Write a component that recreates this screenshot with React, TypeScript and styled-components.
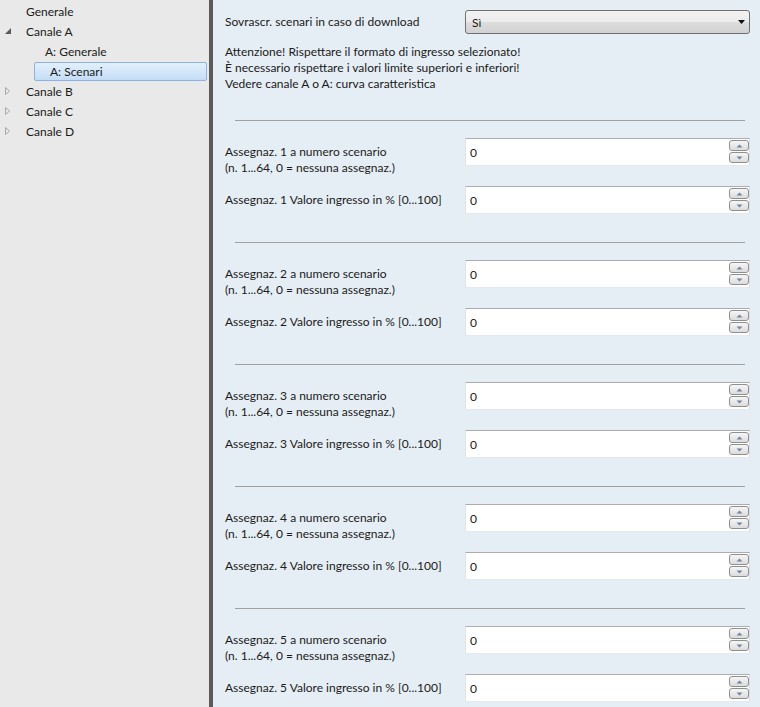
import React from 'react';
import styled, { createGlobalStyle } from 'styled-components';

const GlobalStyle = createGlobalStyle`
    html, body {
        margin: 0;
        padding: 0;
        height: 100%;
        overflow: hidden;
    }
    body {
        font-family: Lato, "Noto Sans", sans-serif;
        font-size: 12px;
        color: #1a1a1a;
    }
`;

const Window = styled.div`
    display: flex;
    height: 100vh;
    overflow: hidden;
`;

const Sidebar = styled.div`
    width: 209px;
    flex-shrink: 0;
    background: #e9e9e9;
    padding-top: 1px;
`;

const Splitter = styled.div`
    width: 4px;
    flex-shrink: 0;
    background: #5b5b5b;
`;

const TreeRow = styled.div`
    position: relative;
    display: flex;
    align-items: center;
    height: 20px;
`;

const Expander = styled.span`
    position: absolute;
    left: 4px;
    top: 6px;
    width: 8px;
    height: 8px;
    display: flex;
`;

const TreeLabel = styled.div<{ $level: number; $selected?: boolean }>`
    display: flex;
    align-items: center;
    box-sizing: border-box;
    height: 20px;
    margin-left: ${p => (p.$level === 0 ? 22 : 34)}px;
    padding-left: ${p => (p.$level === 0 ? 4 : p.$selected ? 15 : 11)}px;
    ${p => p.$selected && `
        width: 173px;
        height: 19px;
        border: 1px solid #8db2e3;
        border-radius: 2px;
        background: linear-gradient(#e3f0fd, #c4ddf5);
    `}
`;

const Content = styled.div`
    flex: 1;
    background: #e6eef5;
    padding: 10px 10px 0 12px;
    overflow: hidden;
`;

const Row = styled.div<{ $h?: number }>`
    display: flex;
    align-items: flex-start;
    height: ${p => p.$h ?? 28}px;
`;

const Label = styled.div<{ $pad?: number }>`
    width: 240px;
    flex-shrink: 0;
    line-height: 16px;
    padding-top: ${p => p.$pad ?? 6}px;
`;

const Select = styled.div`
    flex: 1;
    display: flex;
    align-items: center;
    justify-content: space-between;
    box-sizing: border-box;
    height: 24px;
    padding: 0 4px 0 6px;
    border: 1px solid #707070;
    border-radius: 3px;
    background: linear-gradient(#f3f3f3 0%, #ebebeb 50%, #dddddd 51%, #d2d2d2 100%);
`;

const Notes = styled.div`
    margin-top: 10px;
    line-height: 16px;
`;

const Group = styled.div`
    padding-top: 28px;
`;

const Separator = styled.div`
    height: 1px;
    background: #a0a0a0;
    margin: 0 5px 17px 10px;
`;

const Rows = styled.div`
    display: flex;
    flex-direction: column;
    gap: 20px;
`;

const Input = styled.div`
    flex: 1;
    display: flex;
    align-items: center;
    justify-content: space-between;
    box-sizing: border-box;
    height: 28px;
    padding: 0 0 0 4px;
    background: #ffffff;
    border-top: 1px solid #abadb3;
    border-left: 1px solid #e2e3ea;
    border-right: 1px solid #dbdfe6;
    border-bottom: 1px solid #e3e9ef;
`;

const Spinner = styled.div`
    display: flex;
    flex-direction: column;
    gap: 1px;
    align-self: flex-start;
    margin-top: 1px;
`;

const SpinButton = styled.div`
    width: 20px;
    height: 11px;
    box-sizing: border-box;
    display: flex;
    align-items: center;
    justify-content: center;
    border: 1px solid #8e8f8f;
    border-radius: 3px;
    background: linear-gradient(#f6f6f6, #dcdcdc);
`;

const tree = [
    { label: 'Generale', level: 0 },
    { label: 'Canale A', level: 0, expander: 'open' },
    { label: 'A: Generale', level: 1 },
    { label: 'A: Scenari', level: 1, selected: true },
    { label: 'Canale B', level: 0, expander: 'closed' },
    { label: 'Canale C', level: 0, expander: 'closed' },
    { label: 'Canale D', level: 0, expander: 'closed' },
];

const OpenGlyph = () => (
    <svg width="8" height="8" viewBox="0 0 8 8">
        <polygon points="7,1 7,7 1,7" fill="#595959" />
    </svg>
);

const ClosedGlyph = () => (
    <svg width="8" height="8" viewBox="0 0 8 8">
        <polygon points="1.5,0.5 5.5,4 1.5,7.5" fill="none" stroke="#a8a8a8" strokeWidth="1" />
    </svg>
);

const Arrow = ({ down }: { down?: boolean }) => (
    <svg width="7" height="4" viewBox="0 0 7 4">
        <polygon points={down ? '0.5,0.5 6.5,0.5 3.5,3.5' : '0.5,3.5 6.5,3.5 3.5,0.5'} fill="#7284a0" />
    </svg>
);

const NumberField = ({ value }: { value: string }) => (
    <Input>
        <span>{value}</span>
        <Spinner>
            <SpinButton><Arrow /></SpinButton>
            <SpinButton><Arrow down /></SpinButton>
        </Spinner>
    </Input>
);

const App = () => {
    const groups = [1, 2, 3, 4, 5];
    return (
        <>
            <GlobalStyle />
            <Window>
                <Sidebar>
                    {tree.map(item => (
                        <TreeRow key={item.label}>
                            {item.expander && (
                                <Expander>{item.expander === 'open' ? <OpenGlyph /> : <ClosedGlyph />}</Expander>
                            )}
                            <TreeLabel $level={item.level} $selected={item.selected}>{item.label}</TreeLabel>
                        </TreeRow>
                    ))}
                </Sidebar>
                <Splitter />
                <Content>
                    <Row $h={24}>
                        <Label $pad={4}>Sovrascr. scenari in caso di download</Label>
                        <Select>
                            <span>Sì</span>
                            <svg width="7" height="4" viewBox="0 0 7 4">
                                <polygon points="0,0 7,0 3.5,4" fill="#111" />
                            </svg>
                        </Select>
                    </Row>
                    <Notes>
                        Attenzione! Rispettare il formato di ingresso selezionato!<br />
                        È necessario rispettare i valori limite superiori e inferiori!<br />
                        Vedere canale A o A: curva caratteristica
                    </Notes>
                    {groups.map(n => (
                        <Group key={n}>
                            <Separator />
                            <Rows>
                                <Row>
                                    <Label>
                                        Assegnaz. {n} a numero scenario<br />
                                        (n. 1...64, 0 = nessuna assegnaz.)
                                    </Label>
                                    <NumberField value="0" />
                                </Row>
                                <Row>
                                    <Label>Assegnaz. {n} Valore ingresso in % [0...100]</Label>
                                    <NumberField value="0" />
                                </Row>
                            </Rows>
                        </Group>
                    ))}
                </Content>
            </Window>
        </>
    );
};

export default App;
